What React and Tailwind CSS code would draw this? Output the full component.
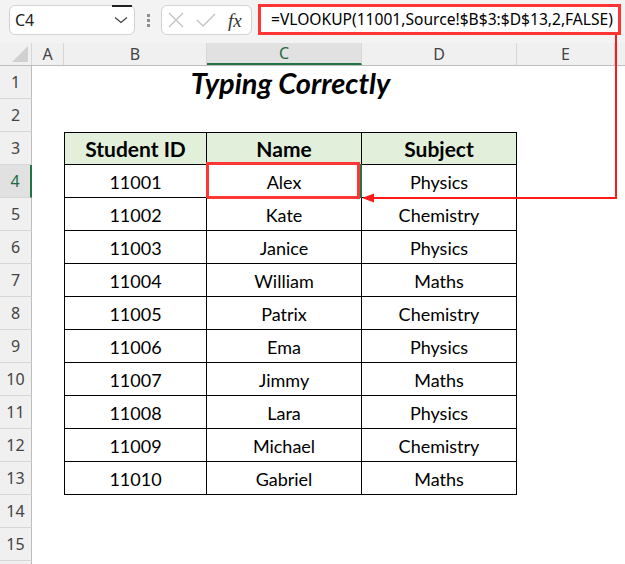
import React from "react";

const data = [
  ["11001", "Alex", "Physics"],
  ["11002", "Kate", "Chemistry"],
  ["11003", "Janice", "Physics"],
  ["11004", "William", "Maths"],
  ["11005", "Patrix", "Chemistry"],
  ["11006", "Ema", "Physics"],
  ["11007", "Jimmy", "Maths"],
  ["11008", "Lara", "Physics"],
  ["11009", "Michael", "Chemistry"],
  ["11010", "Gabriel", "Maths"],
];

const cols = [
  { l: "A", w: "w-[32px]" },
  { l: "B", w: "w-[143px]" },
  { l: "C", w: "w-[155px]" },
  { l: "D", w: "w-[155px]" },
  { l: "E", w: "w-[98px]" },
  { l: "", w: "flex-1" },
];

function RowHeader({ n }) {
  const sel = n === 4;
  return (
    <div
      className={
        "w-[32px] shrink-0 h-full flex items-center justify-center border-b border-[#d6d6d6] text-[16px] font-['Noto_Sans',sans-serif] " +
        (sel
          ? "bg-[#e1e1e1] border-r-2 border-r-[#217346] text-[#1e6b41]"
          : "bg-[#f0f0f0] border-r border-r-[#bdbdbd] text-[#444]")
      }
    >
      {n}
    </div>
  );
}

function TableRow({ cells, header, first, selected }) {
  return (
    <div className="flex h-full">
      <div className="w-[32px] shrink-0" />
      {cells.map((c, i) => (
        <div
          key={i}
          className={
            (i === 0 ? "w-[143px] border-l " : "w-[155px] ") +
            (first ? "border-t " : "") +
            (header ? "bg-[#e2efda] font-bold text-[21px] " : "text-[18px] pt-[3px] ") +
            "relative shrink-0 h-full border-r border-b border-black flex items-center justify-center text-black"
          }
        >
          {c}
          {selected && i === 1 && (
            <>
              <div className="absolute right-[-1px] top-[-1px] bottom-[-1px] w-[2px] bg-[#217346]" />
              <div className="absolute left-[-1px] top-[-3px] w-[154px] h-[37px] border-[3px] border-[#ff3636]" />
            </>
          )}
        </div>
      ))}
    </div>
  );
}

export default function App() {
  const rowNums = Array.from({ length: 15 }, (_, i) => i + 1);
  return (
    <div className="relative w-[625px] h-[564px] overflow-hidden bg-white font-['Lato',sans-serif]">
      {/* Top formula bar */}
      <div className="h-[43px] bg-[#f3f3f3] flex items-start">
        <div className="ml-[9px] mt-[5px] w-[126px] h-[30px] rounded-[6px] border border-[#d2d2d2] bg-white flex items-center pl-[5px] pr-[6px] relative">
          <span className="text-[16px] text-[#222] font-['Noto_Sans',sans-serif]">C4</span>
          <div className="absolute top-[-1px] left-[102px] w-[20px] h-[2px] bg-[#222]" />
          <svg className="ml-auto" width="14" height="8" viewBox="0 0 14 8">
            <path d="M1 1.5 L7 6.5 L13 1.5" fill="none" stroke="#444" strokeWidth="1.3" />
          </svg>
        </div>
        <div className="w-[26px] h-[43px] flex flex-col items-center justify-start pt-[14px] gap-[2px]">
          <div className="w-[3px] h-[3px] bg-[#8e8e8e]" />
          <div className="w-[3px] h-[3px] bg-[#8e8e8e]" />
          <div className="w-[3px] h-[3px] bg-[#8e8e8e]" />
        </div>
        <div className="mt-[5px] w-[91px] h-[30px] rounded-[6px] border border-[#d2d2d2] bg-white flex items-center pl-[6px]">
          <svg width="16" height="16" viewBox="0 0 16 16">
            <path d="M1 1 L15 15 M15 1 L1 15" stroke="#c2c2c2" strokeWidth="1.3" />
          </svg>
          <svg className="ml-[12px]" width="20" height="14" viewBox="0 0 20 14">
            <path d="M1 7 L7 13 L19 1" fill="none" stroke="#c2c2c2" strokeWidth="1.3" />
          </svg>
          <span className="ml-[12px] text-[19px] italic text-[#333] font-['Liberation_Serif',serif] leading-none">
            fx
          </span>
        </div>
        <div className="ml-[6px] mt-[4px] w-[363px] h-[31px] border-[3px] border-[#ff3535] bg-white flex items-center pl-[10px]">
          <span className="text-[15.6px] text-black font-['Noto_Sans',sans-serif] whitespace-nowrap">
            =VLOOKUP(11001,Source!$B$3:$D$13,2,FALSE)
          </span>
        </div>
      </div>

      {/* Column headers */}
      <div className="flex h-[23px] bg-[#f0f0f0] border-b border-[#bdbdbd] font-['Noto_Sans',sans-serif]">
        <div className="w-[32px] shrink-0 h-full border-r border-[#d6d6d6] relative">
          <svg className="absolute right-[3px] bottom-[3px]" width="16" height="16" viewBox="0 0 16 16">
            <polygon points="16,0 16,16 0,16" fill="#d0d0d0" />
          </svg>
        </div>
        {cols.map((c) => (
          <div
            key={c.l}
            className={
              c.w +
              " shrink-0 h-full flex items-center justify-center text-[16px] " +
              (c.l === "C"
                ? "bg-[#e1e1e1] border-b-2 border-[#217346] text-[#1e6b41] border-r border-r-[#d6d6d6]"
                : c.l
                ? "border-r border-[#d6d6d6] text-[#444]"
                : "")
            }
          >
            {c.l}
          </div>
        ))}
      </div>

      {/* Rows */}
      <div className="flex">
        <div className="flex flex-col">
          {rowNums.map((n) => (
            <div key={n} className="h-[33px]">
              <RowHeader n={n} />
            </div>
          ))}
          <div className="h-[10px] bg-[#f0f0f0] border-r border-r-[#bdbdbd]" />
        </div>
        <div className="flex flex-col flex-1">
          <div className="h-[33px] flex">
            <div className="w-[32px] shrink-0" />
            <div className="w-[453px] flex items-center justify-center text-[29px] font-bold italic text-black">
              Typing Correctly
            </div>
          </div>
          <div className="h-[33px]" />
          <div className="h-[33px]">
            <TableRow cells={["Student ID", "Name", "Subject"]} header first />
          </div>
          {data.map((r, i) => (
            <div key={r[0]} className="h-[33px]">
              <TableRow cells={r} selected={i === 0} />
            </div>
          ))}
        </div>
      </div>

      {/* Red arrow overlay */}
      <svg className="absolute left-0 top-0 pointer-events-none" width="625" height="564" viewBox="0 0 625 564">
        <path d="M616 35 L616 198 L372 198" fill="none" stroke="#ff1a1a" strokeWidth="2" />
        <polygon points="362,198 374,193.5 374,202.5" fill="#ff1a1a" />
      </svg>
    </div>
  );
}
